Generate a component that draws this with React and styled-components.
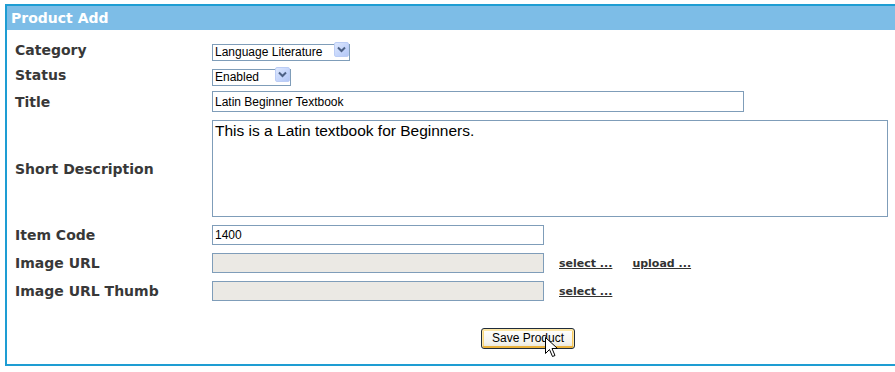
import React from "react";
import styled, { createGlobalStyle } from "styled-components";

const Global = createGlobalStyle`
  html, body { margin: 0; padding: 0; background: #ffffff; overflow: hidden; }
  body { font-family: "DejaVu Sans", Verdana, sans-serif; }
`;

const Panel = styled.div`
  margin: 4px 0 0 5px;
  width: 1000px;
  border: 2px solid #1e9dd3;
  border-right: none;
  background: #ffffff;
`;

const Header = styled.div`
  height: 24px;
  line-height: 25px;
  background: #7dbde7;
  color: #ffffff;
  font-family: "DejaVu Sans", Verdana, sans-serif;
  font-weight: bold;
  font-size: 14px;
  padding-left: 4px;
`;

const Form = styled.div`
  display: flex;
  flex-direction: column;
  gap: 8px;
  padding: 11px 0 15px 8px;
`;

const Row = styled.div`
  display: grid;
  grid-template-columns: 197px auto;
  align-items: center;
  justify-content: start;
`;

const Label = styled.div`
  font-family: "DejaVu Sans", Verdana, sans-serif;
  font-weight: bold;
  font-size: 14px;
  color: #383838;
`;

const Field = styled.div`
  display: flex;
  align-items: center;
`;

const SelectWrap = styled.span`
  position: relative;
  display: inline-block;
  width: ${(p) => p.$w}px;
  height: 17px;
`;

const Select = styled.select`
  appearance: none;
  -webkit-appearance: none;
  box-sizing: border-box;
  width: 100%;
  height: 100%;
  margin: 0;
  border: 1px solid #7f9db9;
  border-radius: 0;
  background: #ffffff;
  font-family: "Liberation Sans", Arial, sans-serif;
  font-size: 12px;
  color: #000000;
  padding: 0 0 0 2px;
  outline: none;
`;

const DropButton = styled.span`
  position: absolute;
  top: 1px;
  right: 1px;
  width: 15px;
  height: 15px;
  box-sizing: border-box;
  border: 1px solid #bccdf5;
  border-radius: 2px;
  background: linear-gradient(135deg, #dde7fd 0%, #c3d4fb 60%, #b3c7f5 100%);
  display: flex;
  align-items: center;
  justify-content: center;
  pointer-events: none;
`;

const TextInput = styled.input`
  box-sizing: border-box;
  width: ${(p) => p.$w}px;
  height: ${(p) => p.$h || 20}px;
  margin: 0;
  border: 1px solid #7f9db9;
  background: ${(p) => (p.disabled ? "#ebe9e4" : "#ffffff")};
  font-family: "Liberation Sans", Arial, sans-serif;
  font-size: 12px;
  color: #000000;
  padding: 0 0 0 2px;
  outline: none;
`;

const TextArea = styled.textarea`
  box-sizing: border-box;
  width: 676px;
  height: 97px;
  margin: 0;
  border: 1px solid #7f9db9;
  background: #ffffff;
  font-family: "Liberation Sans", Arial, sans-serif;
  font-size: 15.5px;
  color: #000000;
  padding: 1px 2px;
  resize: none;
  outline: none;
  display: block;
`;

const Links = styled.div`
  display: flex;
  gap: 20px;
  margin-left: 15px;
`;

const Link = styled.a`
  font-family: "DejaVu Sans", Verdana, sans-serif;
  font-weight: bold;
  font-size: 11px;
  color: #333333;
  text-decoration: underline;
  cursor: pointer;
`;

const ButtonRow = styled.div`
  display: flex;
  padding: 18px 0 0 466px;
`;

const ButtonWrap = styled.span`
  position: relative;
  display: inline-block;
`;

const Button = styled.button`
  box-sizing: border-box;
  width: 94px;
  height: 21px;
  margin: 0;
  padding: 0;
  border: 1px solid #1f2c3c;
  border-radius: 3px;
  background: linear-gradient(#ffffff, #f4f3ee 70%, #e6e3d6);
  box-shadow: inset 0 1px 0 1px #fde7a6, inset 0 -2px 0 0 #eab13a, inset 1px 0 0 1px #f9d67c, inset -1px 0 0 1px #f6c85e;
  font-family: "Liberation Sans", Arial, sans-serif;
  font-size: 12px;
  color: #000000;
`;

const Cursor = styled.svg`
  position: absolute;
  left: 64px;
  top: 10px;
  pointer-events: none;
`;

function Chevron() {
  return (
    <svg width="9" height="7" viewBox="0 0 9 7">
      <path d="M1 1.5 L4.5 5 L8 1.5" fill="none" stroke="#4d6185" strokeWidth="2" />
    </svg>
  );
}

function Dropdown({ width, value, options }) {
  return (
    <SelectWrap $w={width}>
      <Select defaultValue={value}>
        {options.map((o) => (
          <option key={o}>{o}</option>
        ))}
      </Select>
      <DropButton>
        <Chevron />
      </DropButton>
    </SelectWrap>
  );
}

export default function App() {
  return (
    <>
      <Global />
      <Panel>
        <Header>Product Add</Header>
        <Form>
          <Row>
            <Label>Category</Label>
            <Field>
              <Dropdown width={138} value="Language Literature" options={["Language Literature", "Mathematics", "Science"]} />
            </Field>
          </Row>
          <Row>
            <Label>Status</Label>
            <Field>
              <Dropdown width={79} value="Enabled" options={["Enabled", "Disabled"]} />
            </Field>
          </Row>
          <Row>
            <Label>Title</Label>
            <Field>
              <TextInput $w={532} $h={21} defaultValue="Latin Beginner Textbook" />
            </Field>
          </Row>
          <Row>
            <Label>Short Description</Label>
            <Field>
              <TextArea defaultValue="This is a Latin textbook for Beginners." />
            </Field>
          </Row>
          <Row>
            <Label>Item Code</Label>
            <Field>
              <TextInput $w={332} defaultValue="1400" />
            </Field>
          </Row>
          <Row>
            <Label>Image URL</Label>
            <Field>
              <TextInput $w={332} disabled defaultValue="" />
              <Links>
                <Link>select ...</Link>
                <Link>upload ...</Link>
              </Links>
            </Field>
          </Row>
          <Row>
            <Label>Image URL Thumb</Label>
            <Field>
              <TextInput $w={332} disabled defaultValue="" />
              <Links>
                <Link>select ...</Link>
              </Links>
            </Field>
          </Row>
          <ButtonRow>
            <ButtonWrap>
              <Button type="button">Save Product</Button>
              <Cursor width="13" height="21" viewBox="0 0 13 21">
                <path
                  d="M0.5 0.5 L0.5 16.5 L4.5 12.5 L7.5 19.5 L10 18.5 L7 11.5 L12.5 11.5 Z"
                  fill="#ffffff"
                  stroke="#000000"
                  strokeWidth="1"
                  strokeLinejoin="miter"
                />
              </Cursor>
            </ButtonWrap>
          </ButtonRow>
        </Form>
      </Panel>
    </>
  );
}
